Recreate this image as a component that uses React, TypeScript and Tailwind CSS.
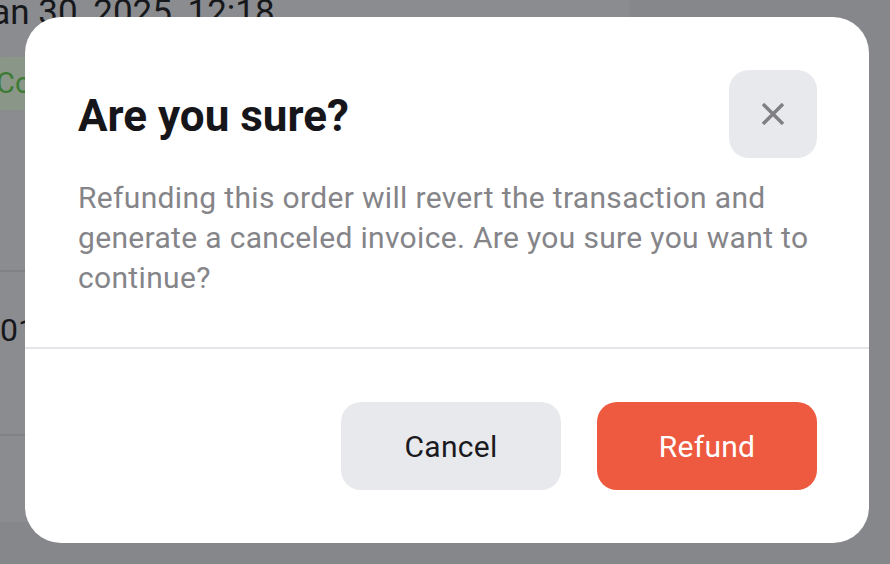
import React from 'react';

const CloseIcon: React.FC = () => (
  <svg width="22" height="22" viewBox="0 0 22 22" fill="none" stroke="#7f7f84" strokeWidth="3.4" strokeLinecap="butt">
    <path d="M1 1L21 21M21 1L1 21" />
  </svg>
);

export default function App() {
  return (
    <div className="relative h-[564px] w-[890px] overflow-hidden bg-[#86878b] font-['Roboto',sans-serif]">
      {/* Dimmed page behind the dialog */}
      <div className="flex h-[522px] w-[629px] flex-col bg-[#8b8c90]">
        <div className="-ml-[28px] -mt-[7px] whitespace-nowrap text-[35px] leading-[40px] text-[#17181b]">
          Jan 30, 2025, 12:18
        </div>
        <div className="mt-[24px] flex h-[53px] w-[200px] -ml-[9px] items-center rounded-[12px] bg-[#8a9687] pl-[5px] text-[29px] text-[#3d7b34]">
          Completed
        </div>
        <div className="mt-[160px] h-[2px] bg-[#808185]" />
        <div className="-ml-[18px] mt-[38px] text-[32px] leading-[40px] text-[#17181b]">001</div>
        <div className="mt-[84px] h-[2px] bg-[#808185]" />
      </div>

      {/* Dialog */}
      <div className="absolute inset-0 pl-[25px] pt-[17px]">
        <div className="flex h-[526px] w-[844px] flex-col rounded-[36px] bg-white">
          <div className="pl-[53px] pr-[52px] pt-[53px] pb-[49px]">
            <div className="flex items-center justify-between">
              <h2 className="pt-[3px] text-[44px] font-bold leading-none text-[#16161a]">Are you sure?</h2>
              <button className="flex h-[88px] w-[88px] items-center justify-center rounded-[20px] bg-[#e8e9ed]">
                <CloseIcon />
              </button>
            </div>
            <p className="mt-[20px] w-[752px] text-[30px] leading-[40px] tracking-[0.33px] text-[#858589]">
              Refunding this order will revert the transaction and generate a canceled invoice. Are you sure you want to continue?
            </p>
          </div>
          <div className="h-[2px] bg-[#e6e6ea]" />
          <div className="flex justify-end gap-[36px] pr-[52px] pt-[53px]">
            <button className="h-[88px] w-[220px] rounded-[20px] bg-[#e8e9ed] text-[30px] tracking-[0.3px] text-[#1a1a1f]">Cancel</button>
            <button className="h-[88px] w-[220px] rounded-[20px] bg-[#ed5a40] text-[30px] tracking-[0.3px] text-white">Refund</button>
          </div>
        </div>
      </div>
    </div>
  );
}
